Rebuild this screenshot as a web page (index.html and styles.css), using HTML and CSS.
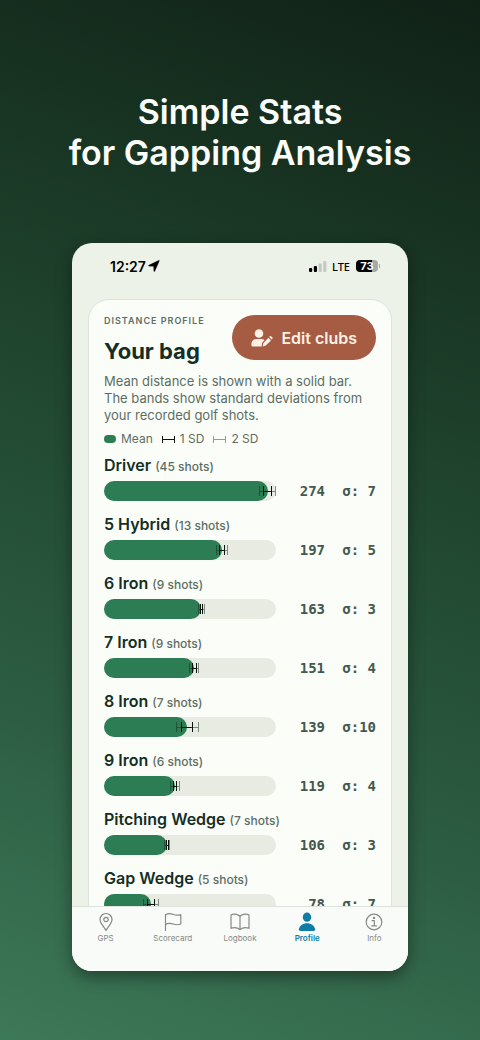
FILE: index.html
```html
<!DOCTYPE html>
<html lang="en">
<head>
<meta charset="utf-8">
<meta name="viewport" content="width=device-width, initial-scale=1">
<title>Simple Stats for Gapping Analysis</title>
<link rel="stylesheet" href="styles.css">
</head>
<body>
<main class="poster">
  <h1 class="headline">Simple Stats<br>for Gapping Analysis</h1>
  <section class="phone">
    <div class="status">
      <div class="status-group">
        <span class="time">12:27</span>
        <svg class="arrow" viewBox="0 0 12 12" aria-hidden="true"><path d="M11.3.7 6.700 11.200q-.5.7-.8-.1L5.800 6.200.9 6.100q-.8-.3-.1-.8L10.700.5q.7-.2.600.2z" fill="#000" stroke="#000" stroke-width=".5"/></svg>
      </div>
      <div class="status-group">
        <svg class="signal" viewBox="0 0 18 11" aria-hidden="true"><rect x="0" y="7" width="3.200" height="4" rx="1"/><rect x="4.800" y="5" width="3.200" height="6" rx="1"/><g fill="#c5cac3"><rect x="9.600" y="2.500" width="3.200" height="8.500" rx="1"/><rect x="14.200" y="0" width="3.200" height="11" rx="1"/></g></svg>
        <span class="network">LTE</span>
        <span class="battery">73</span>
      </div>
    </div>
    <div class="content">
      <article class="card">
        <header class="card-head">
          <div>
            <p class="eyebrow">DISTANCE PROFILE</p>
            <h2 class="title">Your bag</h2>
          </div>
          <button class="edit" type="button">
            <svg class="edit-icon" viewBox="0 0 22 18" aria-hidden="true"><circle cx="8" cy="4.500" r="4.300"/><path d="M6 10h4.500q1.500 0 3 1l-1.700 1.900q-.7.800-.8 1.700L10.700 17.500H2q-1.700 0-1.700-1.600Q.3 10 6 10z"/><path d="m17.400 8.800 2.600 2.600-5.200 5.200-3 .9.500-3.300zM18.200 8l.7-.7q.6-.5 1.200 0l1.300 1.300q.5.600 0 1.200l-.7.700z"/></svg>
            <span>Edit clubs</span>
          </button>
        </header>
        <p class="description">Mean distance is shown with a solid bar. The bands show standard deviations from your recorded golf shots.</p>
        <div class="legend">
          <span class="key"><i class="swatch"></i>Mean</span>
          <span class="key"><i class="range dark"></i>1 SD</span>
          <span class="key"><i class="range"></i>2 SD</span>
        </div>
        <ul class="clubs">
          <li class="club"><h3 class="name">Driver <small>(45 shots)</small></h3><div class="track"><div class="fill" style="width:95.1%"></div><i class="band two" style="left:90.3%;width:9.7%"></i><i class="band one" style="left:92.7%;width:4.9%"></i></div><span class="num">274</span><span class="num">σ: 7</span></li>
          <li class="club"><h3 class="name">5 Hybrid <small>(13 shots)</small></h3><div class="track"><div class="fill" style="width:68.4%"></div><i class="band two" style="left:64.9%;width:7%"></i><i class="band one" style="left:66.7%;width:3.5%"></i></div><span class="num">197</span><span class="num">σ: 5</span></li>
          <li class="club"><h3 class="name">6 Iron <small>(9 shots)</small></h3><div class="track"><div class="fill" style="width:56.6%"></div><i class="band two" style="left:54.5%;width:4.2%"></i><i class="band one" style="left:55.6%;width:2.1%"></i></div><span class="num">163</span><span class="num">σ: 3</span></li>
          <li class="club"><h3 class="name">7 Iron <small>(9 shots)</small></h3><div class="track"><div class="fill" style="width:52.4%"></div><i class="band two" style="left:49.6%;width:5.6%"></i><i class="band one" style="left:51%;width:2.8%"></i></div><span class="num">151</span><span class="num">σ: 4</span></li>
          <li class="club"><h3 class="name">8 Iron <small>(7 shots)</small></h3><div class="track"><div class="fill" style="width:48.3%"></div><i class="band two" style="left:41.6%;width:13.4%"></i><i class="band one" style="left:44.9%;width:6.7%"></i></div><span class="num">139</span><span class="num">σ:10</span></li>
          <li class="club"><h3 class="name">9 Iron <small>(6 shots)</small></h3><div class="track"><div class="fill" style="width:41.3%"></div><i class="band two" style="left:38.5%;width:5.6%"></i><i class="band one" style="left:39.9%;width:2.8%"></i></div><span class="num">119</span><span class="num">σ: 4</span></li>
          <li class="club"><h3 class="name">Pitching Wedge <small>(7 shots)</small></h3><div class="track"><div class="fill" style="width:36.8%"></div><i class="band two" style="left:35%;width:3.6%"></i><i class="band one" style="left:35.9%;width:1.8%"></i></div><span class="num">106</span><span class="num">σ: 3</span></li>
          <li class="club"><h3 class="name">Gap Wedge <small>(5 shots)</small></h3><div class="track"><div class="fill" style="width:27.1%"></div><i class="band two" style="left:22.5%;width:9.2%"></i><i class="band one" style="left:24.8%;width:4.6%"></i></div><span class="num">78</span><span class="num">σ: 7</span></li>
        </ul>
      </article>
    </div>
    <nav class="tabs">
      <a class="tab" href="#gps"><svg viewBox="0 0 20 20" aria-hidden="true"><path d="M10 18.500C8.500 15.500 4 11.500 4 7.500a6 6 0 0 1 12 0c0 4-4.500 8-6 11z"/><circle cx="10" cy="7.500" r="2.200"/></svg>GPS</a>
      <a class="tab" href="#scorecard"><svg viewBox="0 0 20 20" aria-hidden="true"><path d="M2.500 18.500V2.500Q6 .7 10 2.300t7.800.3V12q-3.500 1.500-7.500 0t-7.800.5"/></svg>Scorecard</a>
      <a class="tab" href="#logbook"><svg viewBox="0 0 20 20" aria-hidden="true"><path d="M10 4.200Q6 1 1 2.800v13.500Q6 14.500 10 17.500q4-3 9-1.200V2.800Q14 1 10 4.200zv13.300"/></svg>Logbook</a>
      <a class="tab active" href="#profile" aria-current="page"><svg viewBox="0 0 20 20" aria-hidden="true"><ellipse cx="10" cy="5.200" rx="4.200" ry="4.600"/><path d="M3.500 19Q1.700 19 1.900 17.300C2.500 13.500 6 11.300 10 11.300s7.500 2.200 8.100 6q.2 1.700-1.600 1.700z"/></svg>Profile</a>
      <a class="tab" href="#info"><svg viewBox="0 0 20 20" aria-hidden="true"><circle cx="10" cy="10" r="7.800"/><path d="M8 8.600h2.300v5M7.800 13.900h4.700"/><circle cx="10" cy="5.900" r=".6"/></svg>Info</a>
    </nav>
  </section>
</main>
</body>
</html>
```

FILE: styles.css
```css
* {
  box-sizing: border-box;
}

body {
  margin: 0;
  font-family: Inter, "Liberation Sans", sans-serif;
  color: #142e24;
}

h1, h2, h3, p, ul {
  margin: 0;
  padding: 0;
}

.poster {
  min-height: 100vh;
  display: flex;
  flex-direction: column;
  align-items: center;
  padding: 91px 0 69px;
  background: linear-gradient(200deg, #102116 0%, #1d3f2a 35%, #2b5b41 70%, #3d7858 100%);
}

.headline {
  color: #fbfefa;
  font-size: 34px;
  line-height: 41px;
  font-weight: 600;
  text-align: center;
}

.phone {
  width: 70%;
  aspect-ratio: 336 / 728;
  margin-top: 70px;
  display: flex;
  flex-direction: column;
  border-radius: 20px;
  overflow: hidden;
  background: #edf2e9;
  box-shadow: 0 6px 16px rgba(0, 0, 0, 0.4);
}

.status {
  display: flex;
  justify-content: space-between;
  padding: 13px 30px 23px 38px;
  color: #000;
}

.status-group {
  display: flex;
  align-items: center;
  height: 20px;
}

.time {
  font-size: 14px;
  font-weight: 600;
}

.arrow {
  width: 12px;
  height: 12px;
  margin-left: 2px;
}

.signal {
  width: 18px;
  height: 11px;
}

.network {
  margin: 0 6px 0 5px;
  font-family: "Noto Sans", sans-serif;
  font-size: 11px;
  font-weight: 500;
}

.battery {
  position: relative;
  width: 22px;
  height: 12px;
  border-radius: 4px;
  background: linear-gradient(90deg, #000 73%, #a5aaa4 73%);
  color: #fff;
  font-size: 11px;
  line-height: 12px;
  font-weight: 700;
  text-align: center;
}

.battery::after {
  content: "";
  position: absolute;
  left: 23px;
  top: 4px;
  width: 1px;
  height: 4px;
  background: #a5aaa4;
}

.content {
  flex: 1;
  min-height: 0;
  overflow: hidden;
  padding: 0 16px;
}

.card {
  padding: 15px;
  border: 1px solid #dce3d9;
  border-radius: 21px;
  background: #fbfdf9;
}

.card-head {
  display: flex;
  justify-content: space-between;
}

.eyebrow {
  font-size: 9px;
  line-height: 11px;
  font-weight: 600;
  letter-spacing: 1px;
  color: #5d6d63;
}

.title {
  margin-top: 10px;
  font-size: 22px;
  line-height: 30px;
  font-weight: 700;
}

.edit {
  display: flex;
  align-items: center;
  gap: 8px;
  height: 45px;
  padding: 0 19px;
  border: 0;
  border-radius: 23px;
  background: #a65b43;
  color: #fdf0e4;
  font: 600 16px/20px Inter, sans-serif;
  white-space: nowrap;
}

.edit-icon {
  width: 22px;
  height: 18px;
  fill: #fdf0e4;
}

.description {
  margin-top: 7px;
  font-size: 13px;
  line-height: 17px;
  color: #5d6d63;
}

.legend {
  display: flex;
  gap: 9px;
  margin-top: 7px;
  font-size: 12px;
  line-height: 16px;
  color: #5d6d63;
}

.key {
  display: flex;
  align-items: center;
  gap: 5px;
}

.swatch {
  width: 12px;
  height: 8px;
  border-radius: 4px;
  background: #2c7d54;
}

.range {
  width: 13px;
  height: 7px;
  border: solid #929c95;
  border-width: 0 1px;
  background: linear-gradient(#929c95, #929c95) center / 100% 1px no-repeat;
}

.range.dark {
  border-color: #111;
  background-image: linear-gradient(#111, #111);
}

.clubs {
  display: grid;
  gap: 13px;
  margin-top: 8px;
  list-style: none;
}

.club {
  display: grid;
  grid-template-columns: 1fr 49px 51px;
  row-gap: 6px;
}

.name {
  grid-column: 1 / -1;
  font-size: 16px;
  line-height: 20px;
  font-weight: 600;
}

.name small {
  font-size: 12px;
  line-height: 12px;
  font-weight: 500;
  color: #5d6d63;
}

.track {
  position: relative;
  height: 20px;
  border-radius: 10px;
  background: #e7ebe2;
}

.fill {
  height: 100%;
  border-radius: 10px;
  background: #2c7d54;
}

.band {
  position: absolute;
  top: 5px;
  height: 10px;
  border: solid;
  border-width: 0 1px;
  background: linear-gradient(currentColor, currentColor) center / 100% 1px no-repeat;
}

.band.one {
  color: #06120c;
}

.band.two {
  color: rgba(20, 40, 30, 0.5);
}

.num {
  font: 700 14px/20px "DejaVu Sans Mono", monospace;
  color: #43594d;
  text-align: right;
}

.tabs {
  display: grid;
  grid-template-columns: repeat(5, 1fr);
  height: 65px;
  padding-top: 5px;
  border-top: 1px solid #dde2dc;
  background: #f9fbf8;
}

.tab {
  display: flex;
  flex-direction: column;
  align-items: center;
  font-size: 8px;
  line-height: 12px;
  color: #858a87;
  text-decoration: none;
}

.tab svg {
  width: 20px;
  height: 20px;
  fill: none;
  stroke: currentColor;
  stroke-width: 1.2;
  stroke-linejoin: round;
  stroke-linecap: round;
}

.tab.active {
  color: #117ca6;
  font-weight: 600;
}

.tab.active svg {
  fill: currentColor;
  stroke: none;
}
```
